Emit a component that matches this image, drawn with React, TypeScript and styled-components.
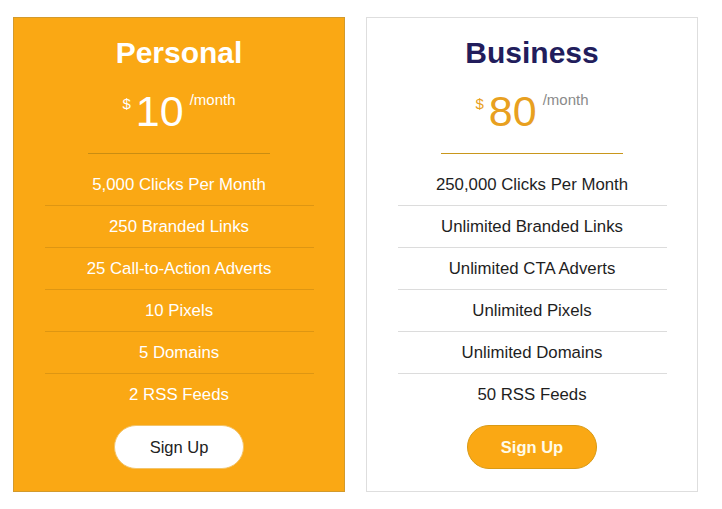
import React from "react";
import styled, { createGlobalStyle, css } from "styled-components";

const GlobalStyle = createGlobalStyle`
  body {
    margin: 0;
    background: #ffffff;
    font-family: "Liberation Sans", Arial, sans-serif;
  }
`;

const ORANGE = "#faa814";

interface Plan {
  name: string;
  price: string;
  features: string[];
  featured: boolean;
}

const plans: Plan[] = [
  {
    name: "Personal",
    price: "10",
    featured: true,
    features: [
      "5,000 Clicks Per Month",
      "250 Branded Links",
      "25 Call-to-Action Adverts",
      "10 Pixels",
      "5 Domains",
      "2 RSS Feeds",
    ],
  },
  {
    name: "Business",
    price: "80",
    featured: false,
    features: [
      "250,000 Clicks Per Month",
      "Unlimited Branded Links",
      "Unlimited CTA Adverts",
      "Unlimited Pixels",
      "Unlimited Domains",
      "50 RSS Feeds",
    ],
  },
];

const Page = styled.div`
  display: flex;
  gap: 21px;
  padding: 17px 24px 0 13px;
`;

const Card = styled.div<{ $featured: boolean }>`
  box-sizing: border-box;
  width: 332px;
  height: 475px;
  padding: 18px 0 0;
  display: flex;
  flex-direction: column;
  align-items: center;
  ${(p) =>
    p.$featured
      ? css`
          background: ${ORANGE};
          border: 1px solid #d39a2c;
        `
      : css`
          background: #ffffff;
          border: 1px solid #dedede;
        `}
`;

const Title = styled.h2<{ $featured: boolean }>`
  margin: 0;
  font-size: 30px;
  line-height: 34px;
  font-weight: 700;
  color: ${(p) => (p.$featured ? "#ffffff" : "#221d5c")};
`;

const PriceRow = styled.div<{ $featured: boolean }>`
  margin-top: 17px;
  height: 48px;
  display: flex;
  align-items: flex-start;
  color: ${(p) => (p.$featured ? "#ffffff" : "#e8a020")};
`;

const Currency = styled.span`
  font-size: 15px;
  line-height: 15px;
  margin-top: 9px;
  margin-right: 5px;
`;

const Amount = styled.span`
  font-size: 43px;
  line-height: 48px;
`;

const Period = styled.span<{ $featured: boolean }>`
  font-size: 15px;
  line-height: 15px;
  margin-top: 5px;
  margin-left: 6px;
  color: ${(p) => (p.$featured ? "#ffffff" : "#8a8a8a")};
`;

const Divider = styled.div<{ $featured: boolean }>`
  margin-top: 18px;
  width: 182px;
  height: 1px;
  background: ${(p) => (p.$featured ? "#c98d12" : "#c9971c")};
`;

const Features = styled.ul`
  list-style: none;
  margin: 10px 0 0;
  padding: 0;
  width: 269px;
`;

const Feature = styled.li<{ $featured: boolean }>`
  box-sizing: border-box;
  height: 42px;
  display: flex;
  align-items: center;
  justify-content: center;
  font-size: 16.8px;
  color: ${(p) => (p.$featured ? "#ffffff" : "#1e1e1e")};
  border-bottom: 1px solid ${(p) => (p.$featured ? "#de9612" : "#dcdcdc")};

  &:last-child {
    border-bottom: none;
  }
`;

const SignUp = styled.button<{ $featured: boolean }>`
  margin-top: 9px;
  width: 130px;
  height: 44px;
  border-radius: 22px;
  font-family: inherit;
  font-size: 16.5px;
  cursor: pointer;
  ${(p) =>
    p.$featured
      ? css`
          background: #ffffff;
          color: #222222;
          border: 1px solid #f3c46a;
        `
      : css`
          background: ${ORANGE};
          color: #fffbe8;
          font-weight: 700;
          border: 1px solid #d99a14;
        `}
`;

function PlanCard({ plan }: { plan: Plan }) {
  const f = plan.featured;
  return (
    <Card $featured={f}>
      <Title $featured={f}>{plan.name}</Title>
      <PriceRow $featured={f}>
        <Currency>$</Currency>
        <Amount>{plan.price}</Amount>
        <Period $featured={f}>/month</Period>
      </PriceRow>
      <Divider $featured={f} />
      <Features>
        {plan.features.map((item) => (
          <Feature key={item} $featured={f}>
            {item}
          </Feature>
        ))}
      </Features>
      <SignUp $featured={f}>Sign Up</SignUp>
    </Card>
  );
}

export default function App() {
  return (
    <>
      <GlobalStyle />
      <Page>
        {plans.map((plan) => (
          <PlanCard key={plan.name} plan={plan} />
        ))}
      </Page>
    </>
  );
}
